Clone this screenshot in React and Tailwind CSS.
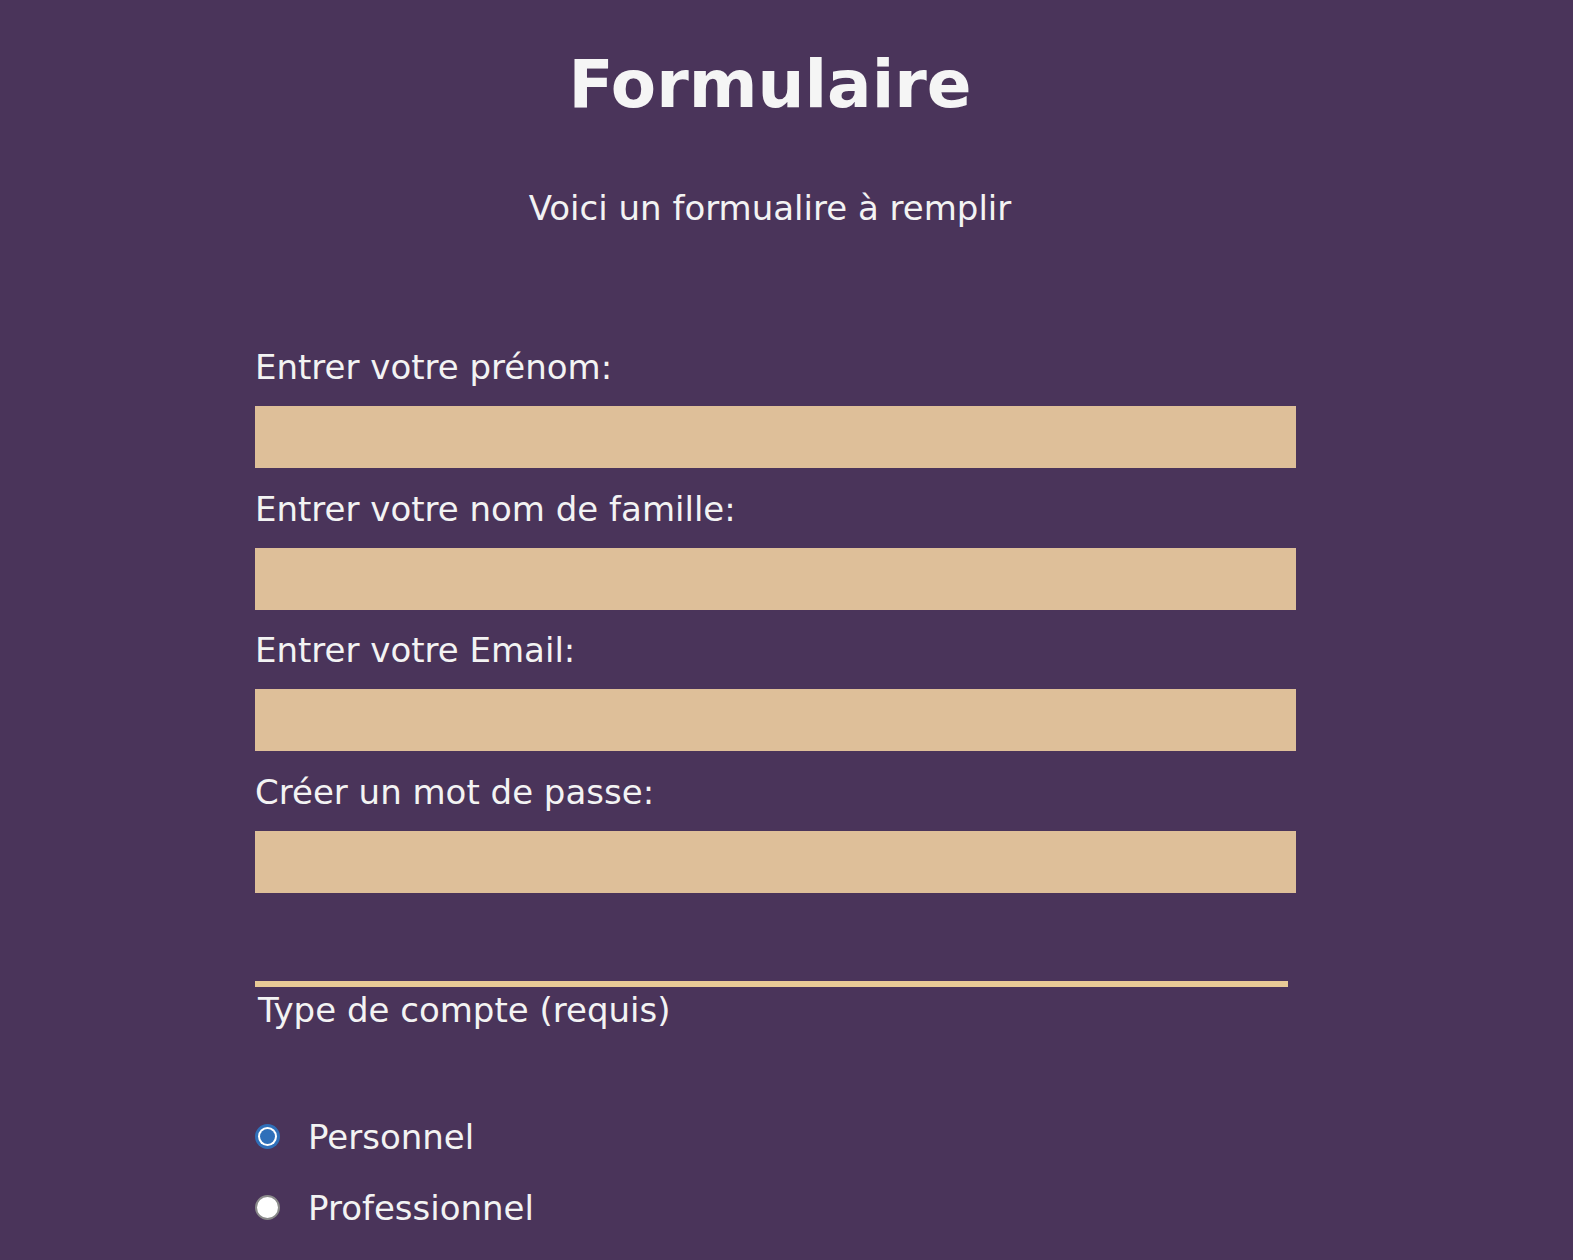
import { useState } from "react";

const fields = [
  { id: "prenom", label: "Entrer votre prénom:", type: "text" },
  { id: "nom", label: "Entrer votre nom de famille:", type: "text" },
  { id: "email", label: "Entrer votre Email:", type: "email" },
  { id: "password", label: "Créer un mot de passe:", type: "password" },
];

const Radio = ({ checked, label, onClick }) => (
  <label className="flex items-center h-[38px] cursor-pointer" onClick={onClick}>
    {checked ? (
      <span className="w-[25px] h-[25px] rounded-full bg-[#2f6fb9] flex items-center justify-center">
        <span className="w-[19px] h-[19px] rounded-full bg-white flex items-center justify-center">
          <span className="w-[15px] h-[15px] rounded-full bg-[#2f6fb9]"></span>
        </span>
      </span>
    ) : (
      <span className="w-[25px] h-[25px] rounded-full bg-white border-2 border-[#8a8a8a]"></span>
    )}
    <span className="ml-[28px]">{label}</span>
  </label>
);

const App = () => {
  const [type, setType] = useState("perso");

  return (
    <div
      className="min-h-screen w-full bg-[#4a345a] text-[#f3f3f3] text-[34px] leading-[38px]"
      style={{ fontFamily: '"DejaVu Sans", Verdana, sans-serif' }}
    >
      <div className="w-[1540px] text-center pt-[46px]">
        <h1 className="text-[66px] leading-[77px] font-bold text-[#f5f5f5]">
          Formulaire
        </h1>
        <p className="mt-[66px]">Voici un formualire à remplir</p>
      </div>

      <form className="pl-[255px] mt-[121px] pb-[40px]">
        <div className="flex flex-col gap-[21.5px] w-[1041px]">
          {fields.map((f) => (
            <div key={f.id} className="flex flex-col">
              <label htmlFor={f.id}>{f.label}</label>
              <input
                id={f.id}
                type={f.type}
                className="mt-[20px] h-[62px] w-full bg-[#debf99] border-0 outline-none px-3 text-[#333]"
              />
            </div>
          ))}
        </div>

        <div className="mt-[88px] w-[1033px] h-[6px] bg-[#e8ca96]"></div>
        <p className="mt-[4px] pl-[3px]">Type de compte (requis)</p>

        <div className="mt-[89px] flex flex-col gap-[33px]">
          <Radio
            checked={type === "perso"}
            label="Personnel"
            onClick={() => setType("perso")}
          />
          <Radio
            checked={type === "pro"}
            label="Professionnel"
            onClick={() => setType("pro")}
          />
        </div>
      </form>
    </div>
  );
};

export default App;
